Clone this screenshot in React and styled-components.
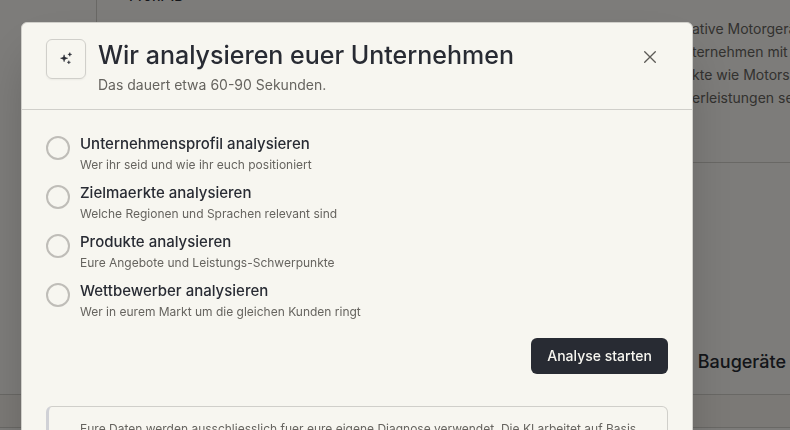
import React from 'react';
import styled, { createGlobalStyle } from 'styled-components';

const steps = [
    { title: 'Unternehmensprofil analysieren', text: 'Wer ihr seid und wie ihr euch positioniert' },
    { title: 'Zielmaerkte analysieren', text: 'Welche Regionen und Sprachen relevant sind' },
    { title: 'Produkte analysieren', text: 'Eure Angebote und Leistungs-Schwerpunkte' },
    { title: 'Wettbewerber analysieren', text: 'Wer in eurem Markt um die gleichen Kunden ringt' },
];

function SparkleIcon() {
    return (
        <svg width="40" height="40" viewBox="0 0 40 40" fill="currentColor" aria-hidden="true">
            <path d="M18 15.6c.5 2.5 1 3.1 3.7 3.6-2.7.5-3.2 1.1-3.7 3.6-.5-2.5-1-3.1-3.7-3.6 2.7-.5 3.2-1.1 3.7-3.6z" stroke="currentColor" strokeWidth=".6" />
            <path d="M24 13.2c.3 1.4.6 1.7 2 2-1.400.3-1.700.6-2 2-.3-1.400-.6-1.700-2-2 1.400-.3 1.700-.6 2-2z" stroke="currentColor" strokeWidth=".5" />
            <path d="M23 21.700c.300 1.200.500 1.500 1.800 1.800-1.300.300-1.500.600-1.800 1.800-.300-1.200-.500-1.500-1.800-1.800 1.300-.300 1.500-.600 1.800-1.800z" stroke="currentColor" strokeWidth=".4" />
        </svg>
    );
}

function CloseIcon() {
    return (
        <svg width="12" height="12" viewBox="0 0 12 12" fill="none" stroke="currentColor" strokeWidth="1.3" strokeLinecap="round" aria-hidden="true">
            <path d="M.7.7l10.600 10.600M11.300.7L.7 11.300" />
        </svg>
    );
}

function Step({ title, text }) {
    return (
        <StepRow>
            <Circle />
            <div>
                <StepTitle>{title}</StepTitle>
                <StepText>{text}</StepText>
            </div>
        </StepRow>
    );
}

function ProfilePage() {
    return (
        <Page aria-hidden="true">
            <ProfileRow>
                <Label>Profil-ID</Label>
                <Description>
                    <span>ative Motorgeräte</span>
                    <span>ternehmen mit</span>
                    <span>kte wie Motorsägen</span>
                    <span>erleistungen sein</span>
                </Description>
            </ProfileRow>
            <Category>Baugeräte</Category>
            <TableHead />
            <TableBody />
        </Page>
    );
}

function App() {
    return (
        <>
            <GlobalStyle />
            <ProfilePage />
            <Overlay>
                <Dialog role="dialog" aria-modal="true" aria-labelledby="dialog-title">
                    <Header>
                        <IconBox>
                            <SparkleIcon />
                        </IconBox>
                        <Heading>
                            <h1 id="dialog-title">Wir analysieren euer Unternehmen</h1>
                            <p>Das dauert etwa 60-90 Sekunden.</p>
                        </Heading>
                        <CloseButton type="button" aria-label="Schliessen">
                            <CloseIcon />
                        </CloseButton>
                    </Header>
                    <Body>
                        <Steps>
                            {steps.map((step) => (
                                <Step key={step.title} {...step} />
                            ))}
                        </Steps>
                        <Actions>
                            <PrimaryButton type="button">Analyse starten</PrimaryButton>
                        </Actions>
                        <Notice>
                            Eure Daten werden ausschliesslich fuer eure eigene Diagnose verwendet. Die KI arbeitet auf Basis
                        </Notice>
                    </Body>
                </Dialog>
            </Overlay>
        </>
    );
}

const GlobalStyle = createGlobalStyle`
    * {
        box-sizing: border-box;
    }

    body {
        margin: 0;
        background: #fbf9f4;
        color: #282b33;
        font-family: Inter, "Liberation Sans", sans-serif;
        overflow: hidden;
    }

    h1, p, ul {
        margin: 0;
        padding: 0;
    }
`;

const Page = styled.div`
    height: 100vh;
    overflow: hidden;
`;

const ProfileRow = styled.div`
    display: flex;
    justify-content: space-between;
    height: 163px;
    margin-left: 96px;
    border-left: 1px solid #d2d0ca;
    border-bottom: 1px solid #d2d0ca;
`;

const Label = styled.div`
    padding-left: 32px;
    margin-top: -14px;
    font-size: 14px;
    line-height: 20px;
    font-weight: 500;
`;

const Description = styled.div`
    display: flex;
    flex-direction: column;
    width: 98px;
    padding-top: 17px;
    font-size: 14px;
    line-height: 23px;
    color: #66645f;
    white-space: nowrap;
`;

const Category = styled.div`
    display: flex;
    justify-content: flex-end;
    align-items: flex-end;
    height: 231px;
    padding: 0 4px 20px;
    font-size: 18px;
    line-height: 24px;
    font-weight: 500;
`;

const TableHead = styled.div`
    height: 34px;
    border-top: 1px solid #d2d0ca;
    border-bottom: 1px solid #d2d0ca;
    background: #f6f2ec;
`;

const TableBody = styled.div`
    height: 40px;
`;

const Overlay = styled.div`
    position: fixed;
    inset: 0;
    padding: 22px 97px 0 21px;
    background: rgba(0, 0, 0, 0.5);
    overflow: hidden;
`;

const Dialog = styled.section`
    background: #f7f6f0;
    border: 1px solid #d0cfca;
    border-radius: 6px;
    box-shadow: 0 25px 50px -12px rgba(0, 0, 0, 0.25);
`;

const Header = styled.header`
    display: flex;
    align-items: flex-start;
    gap: 12px;
    padding: 16px 24px 14px;
    border-bottom: 1px solid #d0cfca;
`;

const IconBox = styled.div`
    flex: none;
    display: flex;
    align-items: center;
    justify-content: center;
    width: 40px;
    height: 40px;
    border: 1px solid #d0cfca;
    border-radius: 6px;
    box-shadow: 0 1px 2px rgba(0, 0, 0, 0.05);
`;

const Heading = styled.div`
    flex: 1;

    h1 {
        font-size: 25px;
        line-height: 32px;
        font-weight: 500;
    }

    p {
        margin-top: 4px;
        font-size: 14px;
        line-height: 20px;
        color: #66645f;
    }
`;

const CloseButton = styled.button`
    flex: none;
    display: flex;
    align-items: center;
    justify-content: center;
    width: 36px;
    height: 36px;
    padding: 0;
    border: 0;
    background: none;
    color: #5c5a56;
    cursor: pointer;
`;

const Body = styled.div`
    padding: 24px;
`;

const Steps = styled.ul`
    display: flex;
    flex-direction: column;
    gap: 8px;
    list-style: none;
`;

const StepRow = styled.li`
    display: flex;
    gap: 10px;
`;

const Circle = styled.span`
    flex: none;
    width: 24px;
    height: 24px;
    margin-top: 2px;
    border: 2px solid #bfbdb8;
    border-radius: 50%;
`;

const StepTitle = styled.p`
    font-size: 15px;
    line-height: 20px;
    font-weight: 500;
`;

const StepText = styled.p`
    margin-top: 1px;
    font-size: 12px;
    line-height: 20px;
    color: #66645f;
`;

const Actions = styled.div`
    display: flex;
    justify-content: flex-end;
    margin-top: 16px;
`;

const PrimaryButton = styled.button`
    height: 36px;
    padding: 0 16px;
    border: 0;
    border-radius: 6px;
    background: #282b33;
    color: #f7f6f0;
    font-family: inherit;
    font-size: 14px;
    line-height: 20px;
    font-weight: 500;
    cursor: pointer;
`;

const Notice = styled.p`
    margin-top: 32px;
    padding: 12px 24px 12px 31px;
    border: 1px solid #d0cfca;
    border-left: 3px solid #d0d1d6;
    border-radius: 6px;
    font-size: 12px;
    line-height: 20px;
    color: #66645f;
`;

export default App;
